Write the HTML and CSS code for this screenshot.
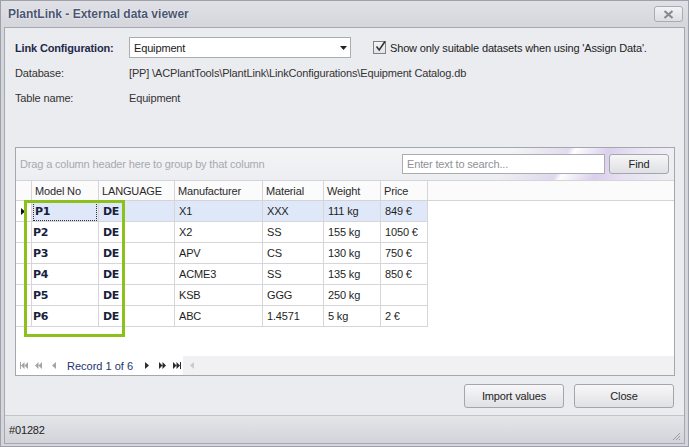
FILE: index.html
```html
<!DOCTYPE html>
<html>
<head>
<meta charset="utf-8">
<link rel="stylesheet" href="styles.css">
</head>
<body>
<div class="window">
  <div class="titlebar">
    <span class="title">PlantLink - External data viewer</span>
    <div class="tb-close">
      <svg width="11" height="9" viewBox="0 0 11 9"><path d="M1.5 1L9.5 8M9.5 1L1.5 8" stroke="#868991" stroke-width="2.2" fill="none"/></svg>
    </div>
  </div>
  <div class="client">
    <div class="config">
      <div class="row">
        <span class="label strong">Link Configuration:</span>
        <div class="combo">
          <span class="combo-text">Equipment</span>
          <svg width="7" height="4" viewBox="0 0 7 4"><path d="M0 0h7L3.5 4z" fill="#222"/></svg>
        </div>
        <div class="check">
          <span class="box"><svg width="13" height="13" viewBox="0 0 13 13"><path d="M2.5 6.5L5.2 10L11 1.5" stroke="#333" stroke-width="1.6" fill="none"/></svg></span>
          <span>Show only suitable datasets when using 'Assign Data'.</span>
        </div>
      </div>
      <div class="row">
        <span class="label">Database:</span>
        <span class="value">[PP] \ACPlantTools\PlantLink\LinkConfigurations\Equipment Catalog.db</span>
      </div>
      <div class="row">
        <span class="label">Table name:</span>
        <span class="value">Equipment</span>
      </div>
    </div>

    <div class="grid">
      <div class="grouppanel">
        <span class="hint">Drag a column header here to group by that column</span>
        <div class="search">Enter text to search...</div>
        <div class="find">Find</div>
      </div>
      <div class="header">
        <div class="c ind"></div>
        <div class="c w1">Model No</div>
        <div class="c w2">LANGUAGE</div>
        <div class="c w3">Manufacturer</div>
        <div class="c w4">Material</div>
        <div class="c w5">Weight</div>
        <div class="c w6">Price</div>
        <div class="c rest"></div>
      </div>
      <div class="rows">
        <div class="r sel">
          <div class="c ind"><svg width="4" height="7" viewBox="0 0 4 7"><path d="M0 0v7l4-3.5z" fill="#111"/></svg></div>
          <div class="c w1 b"><span class="focus">P1</span></div>
          <div class="c w2 b">DE</div>
          <div class="c w3">X1</div>
          <div class="c w4">XXX</div>
          <div class="c w5">111 kg</div>
          <div class="c w6">849 €</div>
        </div>
        <div class="r">
          <div class="c ind"></div>
          <div class="c w1 b">P2</div>
          <div class="c w2 b">DE</div>
          <div class="c w3">X2</div>
          <div class="c w4">SS</div>
          <div class="c w5">155 kg</div>
          <div class="c w6">1050 €</div>
        </div>
        <div class="r">
          <div class="c ind"></div>
          <div class="c w1 b">P3</div>
          <div class="c w2 b">DE</div>
          <div class="c w3">APV</div>
          <div class="c w4">CS</div>
          <div class="c w5">130 kg</div>
          <div class="c w6">750 €</div>
        </div>
        <div class="r">
          <div class="c ind"></div>
          <div class="c w1 b">P4</div>
          <div class="c w2 b">DE</div>
          <div class="c w3">ACME3</div>
          <div class="c w4">SS</div>
          <div class="c w5">135 kg</div>
          <div class="c w6">850 €</div>
        </div>
        <div class="r">
          <div class="c ind"></div>
          <div class="c w1 b">P5</div>
          <div class="c w2 b">DE</div>
          <div class="c w3">KSB</div>
          <div class="c w4">GGG</div>
          <div class="c w5">250 kg</div>
          <div class="c w6"></div>
        </div>
        <div class="r">
          <div class="c ind"></div>
          <div class="c w1 b">P6</div>
          <div class="c w2 b">DE</div>
          <div class="c w3">ABC</div>
          <div class="c w4">1.4571</div>
          <div class="c w5">5 kg</div>
          <div class="c w6">2 €</div>
        </div>
      </div>
      <div class="filler"></div>
      <div class="navigator">
        <div class="nav-buttons">
          <svg class="nb dis" width="8" height="7" viewBox="0 0 8 7"><path d="M0 0h1v7H0z M4.5 0v7L1 3.5z M8 0v7L4.5 3.5z"/></svg>
          <svg class="nb dis n2" width="7" height="7" viewBox="0 0 7 7"><path d="M3.5 0v7L0 3.5z M7 0v7L3.5 3.5z"/></svg>
          <svg class="nb dis n3" width="4" height="7" viewBox="0 0 4 7"><path d="M4 0v7L0 3.5z"/></svg>
          <span class="rec">Record 1 of 6</span>
          <svg class="nb n4" width="4" height="7" viewBox="0 0 4 7"><path d="M0 0v7l4-3.5z"/></svg>
          <svg class="nb n5" width="7" height="7" viewBox="0 0 7 7"><path d="M0 0v7l3.5-3.5z M3.5 0v7L7 3.5z"/></svg>
          <svg class="nb n6" width="8" height="7" viewBox="0 0 8 7"><path d="M0 0v7l3.5-3.5z M3.5 0v7L7 3.5z M7 0h1v7H7z"/></svg>
        </div>
        <div class="hscroll">
          <svg width="4" height="7" viewBox="0 0 4 7"><path d="M4 0v7L0 3.5z" fill="#c9cacd"/></svg>
        </div>
      </div>
      <div class="highlight"></div>
    </div>

    <div class="buttons">
      <div class="btn">Import values</div>
      <div class="btn">Close</div>
    </div>

    <div class="statusbar">
      <span>#01282</span>
      <svg class="grip" width="10" height="10" viewBox="0 0 10 10"><path d="M9 2L2 9M9 5L5 9M9 8L8 9" stroke="#9a9ca2" stroke-width="1" fill="none"/></svg>
    </div>
  </div>
</div>
</body>
</html>
```

FILE: styles.css
```css
* { box-sizing: border-box; }
html, body { margin: 0; padding: 0; }
body {
  width: 689px;
  height: 447px;
  overflow: hidden;
  font-family: "Liberation Sans", Arial, sans-serif;
  font-size: 11px;
  letter-spacing: -0.15px;
  color: #222;
  background: #d6d8de;
}
.window {
  width: 689px;
  height: 447px;
  display: flex;
  flex-direction: column;
  background: linear-gradient(#e0e1e6, #d4d6dc 26px, #d4d6dc);
  border: 1px solid #9ea1a9;
  padding: 0 3px 2px 3px;
}
.titlebar {
  height: 26px;
  flex: none;
  display: flex;
  align-items: center;
  padding: 0 2px 0 4px;
}
.title {
  flex: 1;
  font-weight: bold;
  font-size: 12px;
  letter-spacing: 0;
  color: #4b5672;
  text-shadow: 0 0 2px #fff;
}
.tb-close {
  width: 29px;
  height: 16px;
  border: 1px solid #a8abb2;
  border-radius: 3px;
  background: linear-gradient(#f2f3f5, #dcdee3);
  display: flex;
  align-items: center;
  justify-content: center;
}
.client {
  flex: 1;
  display: flex;
  flex-direction: column;
  background: #ebecf0;
  border: 1px solid #a5a8b0;
}
.config {
  padding: 7px 10px 0 10px;
}
.row {
  display: flex;
  align-items: center;
  height: 25px;
}
.label {
  width: 114px;
  flex: none;
  color: #333;
}
.label.strong {
  font-weight: bold;
  color: #1e2a48;
}
.value { color: #333; }
.combo {
  width: 222px;
  height: 21px;
  flex: none;
  display: flex;
  align-items: center;
  justify-content: space-between;
  border: 1px solid #a9acb3;
  background: #fff;
  padding: 0 3px 0 4px;
  color: #1a1a1a;
}
.check {
  display: flex;
  align-items: center;
  margin-left: 22px;
  color: #222;
}
.box {
  width: 13px;
  height: 13px;
  border: 1px solid #808286;
  background: linear-gradient(#f4f4f4, #e2e3e6);
  margin-right: 4px;
  display: flex;
  position: relative;
}
.box svg { position: absolute; left: 0; top: -2px; }

.grid {
  position: relative;
  margin: 37px 0 0 10px;
  width: 660px;
  height: 229px;
  border: 1px solid #a4a7ae;
  background: #fff;
  display: flex;
  flex-direction: column;
}
.grouppanel {
  height: 33px;
  flex: none;
  display: flex;
  align-items: center;
  padding: 0 5px 0 4px;
  border-bottom: 1px solid #d3d5da;
  background:
    linear-gradient(118deg, rgba(255,255,255,0) 0%, rgba(255,255,255,0) 74%, rgba(214,198,234,0.55) 82%, rgba(255,255,255,0.9) 83%, rgba(212,196,234,0.75) 88%, rgba(226,214,240,0.6) 92%, rgba(255,255,255,0) 100%),
    linear-gradient(#f3f4f6, #eceef1);
}
.hint {
  flex: 1;
  color: #a7a9ae;
}
.search {
  width: 203px;
  height: 20px;
  border: 1px solid #abadb3;
  background: #fff;
  color: #8e9096;
  display: flex;
  align-items: center;
  padding-left: 4px;
}
.find {
  width: 60px;
  height: 20px;
  margin-left: 4px;
  border: 1px solid #a4a7ae;
  border-radius: 3px;
  background: linear-gradient(#f6f6f7, #dfe0e4);
  display: flex;
  align-items: center;
  justify-content: center;
  color: #222;
}
.header {
  height: 20px;
  flex: none;
  display: flex;
  border-bottom: 1px solid #d4d4d6;
  background: #fbfbfc;
  color: #2a2a2a;
}
.c {
  flex: none;
  display: flex;
  align-items: center;
  padding-left: 3px;
  border-right: 1px solid #d6d6d8;
  white-space: nowrap;
}
.ind { width: 16px; padding-left: 5px; }
.w1 { width: 67px; }
.w2 { width: 76px; }
.w3 { width: 88px; }
.w4 { width: 61px; }
.w5 { width: 57px; }
.w6 { width: 47px; }
.header .rest { flex: 1; border-right: none; }
.rows { flex: none; }
.r {
  display: flex;
  width: 412px;
  height: 21px;
  border-bottom: 1px solid #d6d6d8;
  color: #1e1e1e;
}
.r .c:not(.ind) { padding-left: 4px; }
.r.sel .c:not(.ind) { background: #dfe8f8; }
.b {
  font-family: "DejaVu Sans", sans-serif;
  font-weight: bold;
  letter-spacing: -0.3px;
  color: #18213d;
}
.r .c.w1.b { padding-left: 1px; }
.focus {
  display: flex;
  align-items: center;
  height: 19px;
  width: 64px;
  padding-left: 1px;
  border: 1px dotted #333;
}
.filler { flex: 1; }
.navigator {
  height: 19px;
  flex: none;
  display: flex;
}
.nav-buttons {
  width: 167px;
  display: flex;
  align-items: center;
  padding-left: 4px;
  background: #fff;
}
.nb { fill: #2c2c2c; flex: none; }
.nb.dis { fill: #a2a4a8; }
.n2 { margin-left: 7px; }
.n3 { margin-left: 10px; }
.rec {
  margin-left: 11px;
  letter-spacing: 0;
  color: #1e3470;
}
.n4 { margin-left: 12px; }
.n5 { margin-left: 10px; }
.n6 { margin-left: 7px; }
.hscroll {
  flex: 1;
  display: flex;
  align-items: center;
  padding-left: 7px;
  background: #f1f1f3;
}
.highlight {
  position: absolute;
  left: 8px;
  top: 52px;
  width: 101px;
  height: 137px;
  border: 3px solid #8cc11d;
  pointer-events: none;
}
.buttons {
  display: flex;
  justify-content: flex-end;
  gap: 10px;
  padding-right: 10px;
  margin-top: 8px;
}
.btn {
  width: 100px;
  height: 24px;
  border: 1px solid #a3a6ad;
  border-radius: 3px;
  background: linear-gradient(#f7f7f8, #e0e1e5);
  display: flex;
  align-items: center;
  justify-content: center;
  color: #222;
}
.statusbar {
  margin-top: auto;
  height: 28px;
  display: flex;
  align-items: center;
  justify-content: space-between;
  padding: 0 3px 0 4px;
  border-top: 1px solid #c2c4ca;
  background: linear-gradient(#e4e5e9, #d2d4da);
  color: #222;
  position: relative;
}
.grip { align-self: flex-end; margin-bottom: 2px; }
```
